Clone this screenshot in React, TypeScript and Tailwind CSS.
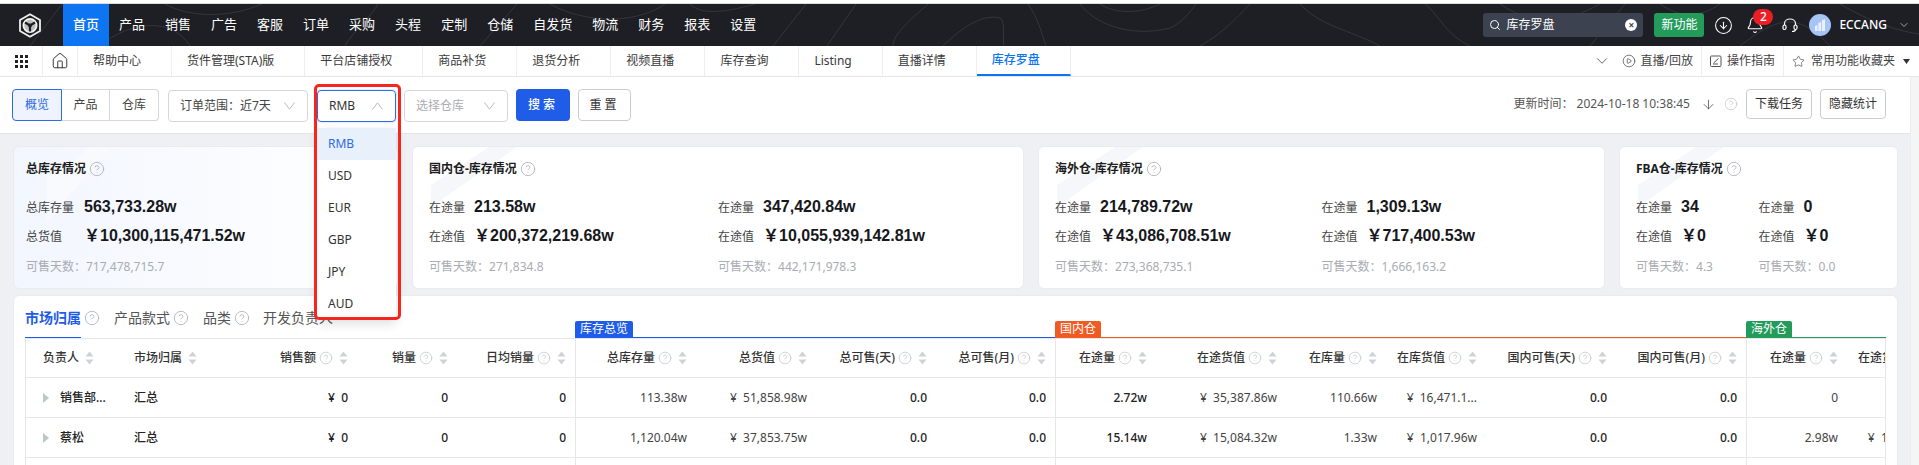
import { Bell, ChevronDown, CircleArrowDown, CircleHelp, CirclePlay, House, ArrowDown, Search, Star } from 'lucide-react'

const menus = ['产品', '销售', '广告', '客服', '订单', '采购', '头程', '定制', '仓储', '自发货', '物流', '财务', '报表', '设置']
const tabs = ['帮助中心', '货件管理(STA)版', '平台店铺授权', '商品补货', '退货分析', '视频直播', '库存查询', 'Listing', '直播详情']
const currencies = ['USD', 'EUR', 'GBP', 'JPY', 'AUD']

const columns = [
  { title: '负责人', width: 'w-[93px]', box: 'pl-[17px] justify-start', sortOnly: true },
  { title: '市场归属', width: 'w-[120px]', box: 'pl-[15px] justify-start', sortOnly: true },
  { title: '销售额', width: 'w-[118px]', box: 'pr-[9px] justify-end' },
  { title: '销量', width: 'w-[100px]', box: 'pr-[9px] justify-end' },
  { title: '日均销量', width: 'w-[119px] border-r border-[#e5e7eb]', box: 'pr-[9px] justify-end' },
  { title: '总库存量', width: 'w-[120px]', box: 'pr-[9px] justify-end' },
  { title: '总货值', width: 'w-[120px]', box: 'pr-[9px] justify-end' },
  { title: '总可售(天)', width: 'w-[120px]', box: 'pr-[9px] justify-end' },
  { title: '总可售(月)', width: 'w-[120px] border-r border-[#e5e7eb]', box: 'pr-[9px] justify-end' },
  { title: '在途量', width: 'w-[100px]', box: 'pr-[9px] justify-end' },
  { title: '在途货值', width: 'w-[130px]', box: 'pr-[9px] justify-end' },
  { title: '在库量', width: 'w-[100px]', box: 'pr-[9px] justify-end' },
  { title: '在库货值', width: 'w-[100px]', box: 'pr-[9px] justify-end' },
  { title: '国内可售(天)', width: 'w-[130px]', box: 'pr-[9px] justify-end' },
  { title: '国内可售(月)', width: 'w-[131px] border-r border-[#e5e7eb]', box: 'pr-[9px] justify-end' },
  { title: '在途量', width: 'w-[100px]', box: 'pr-[9px] justify-end' },
  { title: '在途货值', width: 'w-[100px]', box: 'pr-[9px] justify-end' },
]

const boldCols = [2, 3, 4, 7, 8, 9, 13, 14]

const rows = [
  ['销售部...', '汇总', '¥\u00a0\u00a00', '0', '0', '113.38w', '¥\u00a0\u00a051,858.98w', '0.0', '0.0', '2.72w', '¥\u00a0\u00a035,387.86w', '110.66w', '¥\u00a0\u00a016,471.1...', '0.0', '0.0', '0', '¥\u00a0\u00a00'],
  ['蔡松', '汇总', '¥\u00a0\u00a00', '0', '0', '1,120.04w', '¥\u00a0\u00a037,853.75w', '0.0', '0.0', '15.14w', '¥\u00a0\u00a015,084.32w', '1.33w', '¥\u00a0\u00a01,017.96w', '0.0', '0.0', '2.98w', '¥\u00a0\u00a01,017.96w'],
  ['', '', '', '', '', '', '', '', '', '', '', '', '', '', '', '', ''],
]

const cards = [
  { title: '国内仓-库存情况', width: 'w-[612px]', cols: [['213.58w', '￥200,372,219.68w', '271,834.8'], ['347,420.84w', '￥10,055,939,142.81w', '442,171,978.3']] },
  { title: '海外仓-库存情况', width: 'w-[567px]', cols: [['214,789.72w', '￥43,086,708.51w', '273,368,735.1'], ['1,309.13w', '￥717,400.53w', '1,666,163.2']] },
  { title: 'FBA仓-库存情况', width: 'w-[279px]', cols: [['34', '￥0', '4.3'], ['0', '￥0', '0.0']] },
]

const Help = ({ small }: { small?: boolean }) => (
  <CircleHelp className={small ? 'size-[14px] shrink-0 text-[#c4c7cc]' : 'size-4 shrink-0 text-[#b0b3b8]'} strokeWidth={1.3} />
)

const Sort = () => (
  <svg className="ml-[6px] shrink-0" width="9" height="14" viewBox="0 0 9 14">
    <path d="M4.5 0.5 L8.5 5.5 H0.5 Z" fill="#cfd3d8" />
    <path d="M4.5 13.5 L8.5 8.5 H0.5 Z" fill="#cfd3d8" />
  </svg>
)

const Caret = ({ up }: { up?: boolean }) => (
  <svg width="11" height="8" viewBox="0 0 11 8" fill="none" stroke="#b8bbc1" strokeWidth="1">
    <path d={up ? 'M0.5 7.5 L5.5 0.8 L10.5 7.5' : 'M0.5 0.5 L5.5 7.2 L10.5 0.5'} />
  </svg>
)

const Logo = () => (
  <svg width="24" height="25" viewBox="0 0 24 25">
    <path d="M12 1.3 L22 7 V18 L12 23.7 L2 18 V7 Z" fill="none" stroke="#f0f0f0" strokeWidth="1.8" strokeLinejoin="round" />
    <circle cx="12" cy="12.5" r="6.6" fill="#bdbdbd" stroke="#f4f4f4" strokeWidth="1.8" />
    <path d="M12 12.5 L7 9.5 M12 12.5 L17 9.5 M12 12.5 V18.5" stroke="#1e1f25" strokeWidth="2.2" />
    <circle cx="12" cy="12.5" r="2" fill="#1e1f25" />
  </svg>
)

const Contours = () => (
  <svg className="absolute inset-0 h-full w-full" viewBox="0 0 1919 42" preserveAspectRatio="none">
    <g fill="none" stroke="#34363c" strokeWidth="1">
      <path d="M30 42 L62 0" />
      <path d="M100 42 C125 20 170 10 190 42" />
      <path d="M165 0 C190 14 230 14 262 0" />
      <path d="M345 42 C352 28 372 12 378 0" />
      <path d="M480 42 L517 0" />
      <path d="M550 0 C590 22 640 18 665 0" />
      <path d="M690 0 C700 10 720 10 755 0" />
      <path d="M773 42 L806 0" />
      <path d="M827 42 L856 0" />
      <path d="M893 42 C893 32 905 20 928 0" />
      <path d="M943 42 C965 20 985 10 1000 14 C1006 18 1002 32 1004 42" />
      <path d="M1028 0 C1038 14 1042 30 1046 42" />
      <path d="M1080 0 C1100 26 1140 32 1170 24 C1183 18 1190 8 1196 0" />
      <path d="M1100 0 C1115 10 1140 10 1160 0" />
      <path d="M1200 42 C1225 28 1240 10 1250 0" />
      <path d="M1300 0 C1320 22 1350 26 1380 42" />
      <path d="M1425 0 C1440 12 1445 30 1470 42" />
      <path d="M1500 0 C1530 20 1560 22 1600 0" />
      <path d="M1590 42 L1625 0" />
      <path d="M1660 0 C1680 14 1700 14 1720 0" />
      <path d="M1740 42 C1780 10 1800 10 1830 42" />
      <path d="M1840 0 C1860 12 1890 26 1919 30" />
    </g>
  </svg>
)

const Headset = () => (
  <svg className="ml-[17px]" width="18" height="18" viewBox="0 0 18 18" fill="none" stroke="#fff" strokeWidth="1.2">
    <path d="M3.5 9 V7.5 C3.5 1.5 14.5 1.5 14.5 7.5 V9" />
    <rect x="2" y="9" width="3" height="4.5" rx="1.5" />
    <rect x="13" y="9" width="3" height="4.5" rx="1.5" />
    <path d="M14.5 13.5 C14.5 15 13 15.5 11 15.5" />
  </svg>
)

const Avatar = () => (
  <svg width="22" height="22" viewBox="0 0 22 22">
    <circle cx="11" cy="11" r="11" fill="#a6c4f5" />
    <path d="M6 17 V12 L8.5 11 V17 Z M9.3 17 V9 L12 8 V17 Z M12.8 17 V6.5 L16 5 V17 Z" fill="#eaf1fd" />
  </svg>
)

const GridIcon = () => (
  <svg width="13" height="13" viewBox="0 0 13 13" fill="#222">
    <rect x="0" y="0" width="3" height="3" /><rect x="5" y="0" width="3" height="3" /><rect x="10" y="0" width="3" height="3" />
    <rect x="0" y="5" width="3" height="3" /><rect x="5" y="5" width="3" height="3" /><rect x="10" y="5" width="3" height="3" />
    <rect x="0" y="10" width="3" height="3" /><rect x="5" y="10" width="3" height="3" /><rect x="10" y="10" width="3" height="3" />
  </svg>
)

const GuideIcon = () => (
  <svg width="12" height="12" viewBox="0 0 12 12" fill="none" stroke="#555" strokeWidth="1">
    <rect x="0.5" y="1" width="10.5" height="10.5" rx="1" />
    <path d="M3.5 8 L8.5 3.5 M3 9 H8" />
  </svg>
)

const Stat = ({ label, value, labelWidth }: { label: string; value: string; labelWidth?: string }) => (
  <div className="flex h-[29px] items-center">
    <span className={`${labelWidth ?? 'w-[36px]'} mt-[2px] shrink-0 text-xs text-[#444]`}>{label}</span>
    <span className="ml-[9px] font-['Liberation_Sans','Noto_Sans_CJK_SC',sans-serif] text-base font-bold text-[#17181c]">{value}</span>
  </div>
)

const StatCard = ({ title, width, cols }: { title: string; width: string; cols: string[][] }) => (
  <div className={`relative ${width} h-[143px] overflow-hidden rounded-md border border-[#e9ebef] bg-white px-4 pt-[14px]`}>
    <svg className="absolute top-0 left-[18px]" width="90" height="60" viewBox="0 0 90 60">
      <path d="M0 60 V38 L58 0 H86 Z" fill="#f5f7fa" />
    </svg>
    <div className="relative flex h-[16px] items-center gap-[3px] text-xs font-bold text-[#1c1d21]">
      {title}
      <Help />
    </div>
    <div className="relative mt-[15px] grid grid-cols-2">
      {cols.map((c, i) => (
        <div key={i}>
          <Stat label="在途量" value={c[0]} />
          <Stat label="在途值" value={c[1]} />
        </div>
      ))}
    </div>
    <div className="relative grid grid-cols-2 pt-[9px] text-xs text-[#a9acb2]">
      {cols.map((c, i) => (
        <div key={i}>可售天数：{c[2]}</div>
      ))}
    </div>
  </div>
)

const Section = ({ name, width, tag, line }: { name: string; width: string; tag: string; line: string }) => (
  <div className={`${width} border-b ${line}`}>
    <div className={`${tag} h-4 w-fit rounded-t-[2px] px-[5px] text-xs leading-4 text-white`}>{name}</div>
  </div>
)

const App = () => {
  return (
    <div className="flex h-screen w-full flex-col overflow-hidden bg-[#eef0f4] font-['Noto_Sans','Noto_Sans_CJK_SC',sans-serif] text-xs text-[#333]">
      <div className="h-1 shrink-0 border-b border-[#dcdcdc] bg-white" />

      {/* top bar */}
      <div className="relative flex h-[42px] shrink-0 items-center bg-[#1e1f25] text-[13px] text-white">
        <Contours />
        <div className="relative flex w-[63px] justify-center pr-[4px]">
          <Logo />
        </div>
        <div className="relative flex h-full items-center bg-[#0d74f2] px-[10px] font-medium">首页</div>
        {menus.map((m) => (
          <div key={m} className="relative flex h-full items-center px-[10px]">{m}</div>
        ))}
        <div className="relative ml-auto flex items-center">
          <div className="flex h-6 w-40 items-center rounded-[3px] bg-[#3c4250] pr-[6px] pl-[6px] text-xs">
            <Search className="size-3" strokeWidth={2} />
            <span className="ml-[5px]">库存罗盘</span>
            <span className="ml-auto flex size-3 items-center justify-center rounded-full bg-white text-[10px] leading-none font-bold text-[#3c4250]">×</span>
          </div>
          <div className="ml-[11px] flex h-6 w-[50px] items-center justify-center rounded-[3px] bg-[#239b5b] text-xs">新功能</div>
          <CircleArrowDown className="ml-[10px] size-[19px]" strokeWidth={1.3} />
          <div className="relative ml-[13px] flex">
            <Bell className="size-[18px]" strokeWidth={1.5} />
            <span className="absolute -top-[7px] left-[7px] flex h-4 w-5 items-center justify-center rounded-full bg-[#ee1c25] text-xs font-medium">2</span>
          </div>
          <Headset />
          <div className="ml-[10px] flex"><Avatar /></div>
          <span className="ml-2 text-xs font-medium">ECCANG</span>
          <ChevronDown className="mr-[9px] ml-[11px] size-3 text-[#ccc]" strokeWidth={1.5} />
        </div>
      </div>

      {/* tab bar */}
      <div className="flex h-[31px] shrink-0 border-b border-[#e3e5e8] bg-white">
        <div className="flex w-[43px] items-center justify-center border-r border-[#eceef0] pl-[1px]"><GridIcon /></div>
        <div className="flex w-[35px] items-center justify-center border-r border-[#eceef0]">
          <House className="size-[18px] text-[#333]" strokeWidth={1.3} />
        </div>
        {tabs.map((t) => (
          <div key={t} className="flex items-center border-r border-[#eceef0] pr-[30px] pl-[15px] text-[#3a3a3a]">{t}</div>
        ))}
        <div className="flex w-[94px] items-center justify-center border-r border-[#eceef0] border-b-2 border-b-[#0d74f2] pr-[15px] font-medium text-[#0d74f2]">库存罗盘</div>
        <div className="ml-auto flex items-center text-[#444]">
          <ChevronDown className="mr-[11px] size-[18px]" strokeWidth={1.1} />
          <CirclePlay className="size-[14px]" strokeWidth={1.2} />
          <span className="ml-[5px] pr-2">直播/回放</span>
          <div className="flex h-full items-center border-l border-[#eceef0] pl-[8px]">
            <GuideIcon />
            <span className="ml-[5px] pr-2">操作指南</span>
          </div>
          <div className="flex h-full items-center border-l border-[#eceef0] pl-[8px]">
            <Star className="size-[13px]" strokeWidth={1.2} />
            <span className="ml-[6px]">常用功能收藏夹</span>
            <svg className="mr-[9px] ml-2" width="7" height="5" viewBox="0 0 7 5"><path d="M0 0 H7 L3.5 5 Z" fill="#333" /></svg>
          </div>
        </div>
      </div>

      <div className="flex min-h-0 flex-1">
        <div className="min-w-0 flex-1">
          {/* toolbar */}
          <div className="flex h-[57px] items-start border-b border-[#e3e5e8] bg-white pt-3 pr-6 pl-3">
            <div className="flex h-8 w-[147px] text-[#444]">
              <div className="flex w-[50px] items-center justify-center rounded-l-[4px] border border-[#2e6be6] bg-[#eef3fe] text-[#2e6be6]">概览</div>
              <div className="flex w-[48px] items-center justify-center border-y border-r border-[#d5d7dd]">产品</div>
              <div className="flex flex-1 items-center justify-center rounded-r-[4px] border-y border-r border-[#d5d7dd]">仓库</div>
            </div>
            <div className="mt-[1px] ml-[9px] flex h-8 w-[140px] items-center justify-between rounded-[4px] border border-[#d5d7dd] pr-3 pl-[11px] text-[#444]">
              订单范围：近7天
              <Caret />
            </div>
            <div className="relative mt-[1px] ml-[9px]">
              <div className="flex h-8 w-[79px] items-center justify-between rounded-[4px] border border-[#2e6be6] pr-3 pl-[11px] shadow-[0_0_2px_#a8c2f5]">
                RMB
                <Caret up />
              </div>
              <div className="absolute top-[38px] left-0 z-10 w-[79px] bg-white shadow-[0_4px_10px_rgba(0,0,0,0.12)]">
                <div className="flex h-8 items-center bg-[#e8f0fc] pl-[11px] text-[#2e6be6]">RMB</div>
                {currencies.map((c) => (
                  <div key={c} className="flex h-8 items-center pl-[11px] text-[#333]">{c}</div>
                ))}
              </div>
              <div className="absolute top-[-6px] left-[-3px] z-20 h-[236px] w-[87px] rounded-[5px] border-[3px] border-[#f5261c]" />
            </div>
            <div className="mt-[1px] ml-2 flex h-8 w-[104px] items-center justify-between rounded-[4px] border border-[#d5d7dd] pr-3 pl-[11px] text-[#aaadb3]">
              选择仓库
              <Caret />
            </div>
            <button className="ml-2 flex h-8 w-[54px] items-center justify-center rounded-[4px] bg-[#1f5ce8] font-medium tracking-[3px] text-white">搜索</button>
            <button className="ml-2 flex h-8 w-[53px] items-center justify-center rounded-[4px] border border-[#c9ccd3] tracking-[3px]">重置</button>
            <div className="ml-auto flex items-center text-[#555]">
              <span className="pr-[3px]">更新时间：</span>
              <span>2024-10-18 10:38:45</span>
              <ArrowDown className="ml-[11px] size-[15px]" strokeWidth={1.3} />
              <span className="ml-[8px] flex"><Help small /></span>
              <button className="ml-[8px] flex h-[30px] w-[66px] items-center justify-center rounded-[4px] border border-[#c9ccd3] text-[#333]">下载任务</button>
              <button className="ml-2 flex h-[30px] w-[66px] items-center justify-center rounded-[4px] border border-[#c9ccd3] text-[#333]">隐藏统计</button>
            </div>
          </div>

          <div className="pt-3 pr-3 pl-[13px]">
            {/* summary cards */}
            <div className="flex gap-[14px]">
              <div className="relative h-[143px] w-[385px] overflow-hidden rounded-md border border-[#e9ebef] bg-linear-to-r from-[#f2f6fe] to-white pt-[14px] pl-3">
                <svg className="absolute top-0 left-[10px]" width="90" height="75" viewBox="0 0 90 75">
                  <path d="M22 75 V30 L68 0 H88 Z" fill="#f8fafe" />
                </svg>
                <div className="relative flex h-[16px] items-center gap-[3px] font-bold text-[#1c1d21]">
                  总库存情况
                  <Help />
                </div>
                <div className="relative mt-[15px]">
                  <Stat label="总库存量" value="563,733.28w" labelWidth="w-[49px]" />
                  <Stat label="总货值" value="￥10,300,115,471.52w" labelWidth="w-[49px]" />
                </div>
                <div className="relative pt-[9px] text-[#a9acb2]">可售天数：717,478,715.7</div>
              </div>
              {cards.map((c) => (
                <StatCard key={c.title} title={c.title} width={c.width} cols={c.cols} />
              ))}
            </div>

            {/* table panel */}
            <div className="mt-[6px] h-[200px] rounded-t-md border-x border-t border-[#e9ebef] bg-white px-[11px]">
              <div className="flex h-[42px] items-end">
                <div className="flex h-full w-[550px] items-start pt-[12px] text-sm text-[#555]">
                  <span className="h-[30px] border-b border-[#1f5ce8] font-bold text-[#1f5ce8]">市场归属</span>
                  <span className="mt-[2px] ml-[3px]"><Help /></span>
                  <span className="ml-[14px]">产品款式</span>
                  <span className="mt-[2px] ml-[3px]"><Help /></span>
                  <span className="ml-[14px]">品类</span>
                  <span className="mt-[2px] ml-[3px]"><Help /></span>
                  <span className="ml-[13px]">开发负责人</span>
                </div>
                <Section name="库存总览" width="w-[480px]" tag="bg-[#1f5ce8]" line="border-[#1f5ce8]" />
                <Section name="国内仓" width="w-[691px]" tag="bg-[#f05a23]" line="border-[#f05a23]" />
                <Section name="海外仓" width="flex-1" tag="bg-[#239b5b]" line="border-[#239b5b]" />
              </div>
              <div className="overflow-hidden border-x border-t border-[#e5e7eb]">
                <div className="flex h-[39px] w-[1900px] border-b border-[#e5e7eb]">
                  {columns.map((c, i) => (
                    <div key={i} className={`${c.width} flex shrink-0 items-center ${c.box} font-medium text-[#333]`}>
                      {c.title}
                      {!c.sortOnly && <span className="ml-[3px] flex"><Help small /></span>}
                      <Sort />
                    </div>
                  ))}
                </div>
                {rows.map((r, n) => (
                  <div key={n} className="flex h-10 w-[1900px] border-b border-[#e5e7eb]">
                    {columns.map((c, i) => (
                      <div key={i} className={`${c.width} flex shrink-0 items-center ${c.box} ${boldCols.includes(i) || i < 2 ? 'font-medium text-[#222]' : 'text-[#444]'}`}>
                        {i === 0 && r[0] && (
                          <svg className="mr-[11px]" width="6" height="10" viewBox="0 0 6 10"><path d="M0 0 L6 5 L0 10 Z" fill="#b9c9c9" /></svg>
                        )}
                        {r[i]}
                      </div>
                    ))}
                  </div>
                ))}
              </div>
            </div>
          </div>
        </div>
        <div className="w-[9px] shrink-0 border-l border-[#ececec] bg-[#f5f5f5]" />
      </div>
    </div>
  )
}

export default App
